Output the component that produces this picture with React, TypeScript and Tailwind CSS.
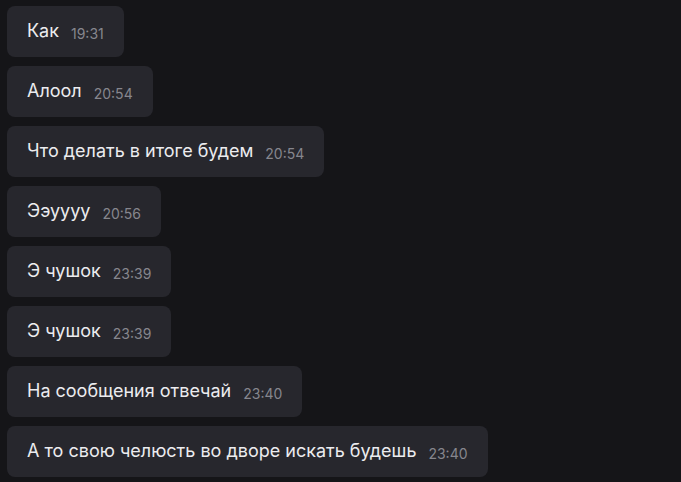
import React from "react";

const messages = [
	{ text: "Как", time: "19:31" },
	{ text: "Алоол", time: "20:54" },
	{ text: "Что делать в итоге будем", time: "20:54" },
	{ text: "Ээуууу", time: "20:56" },
	{ text: "Э чушок", time: "23:39" },
	{ text: "Э чушок", time: "23:39" },
	{ text: "На сообщения отвечай", time: "23:40" },
	{ text: "А то свою челюсть во дворе искать будешь", time: "23:40" },
];

const App = () => {
	return (
		<div className="h-[482px] w-full bg-[#151518] overflow-hidden font-['Inter',sans-serif]">
			<div className="flex flex-col items-start gap-[9px] pt-[6px] pl-[7px]">
				{messages.map((m, i) => (
					<div
						key={i}
						className="flex items-baseline h-[51px] pl-5 pr-5 pt-[14px] rounded-lg bg-[#27272d]"
					>
						<span className="text-[18px] leading-[22px] text-[#ececef]">{m.text}</span>
						<span className="ml-3 text-[14px] translate-y-[2px] text-[#86868d]">{m.time}</span>
					</div>
				))}
			</div>
		</div>
	);
};

export default App;
